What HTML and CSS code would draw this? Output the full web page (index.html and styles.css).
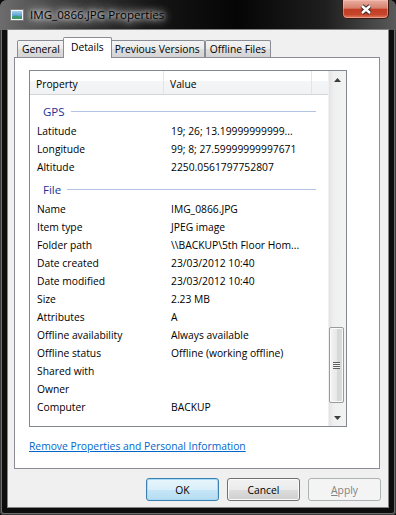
FILE: index.html
```html
<!DOCTYPE html>
<html lang="en">

<head>
    <meta charset="utf-8">
    <title>IMG_0866.JPG Properties</title>
    <link rel="stylesheet" href="styles.css">
</head>

<body>
    <div class="window">
        <div class="titleBar">
            <svg class="titleIcon" width="14" height="12" viewBox="0 0 14 12">
                <defs>
                    <linearGradient id="sky" x1="0" y1="0" x2="0" y2="1">
                        <stop offset="0" stop-color="#9fd0f0"/>
                        <stop offset="1" stop-color="#2f7fbf"/>
                    </linearGradient>
                </defs>
                <rect x="0.5" y="0.5" width="13" height="11" fill="#f6f6f6" stroke="#7d7d7d"/>
                <rect x="2" y="2" width="10" height="8" fill="url(#sky)"/>
                <path d="M2 8 Q5 5.5 8 7 T12 6.5 V10 H2 Z" fill="#3f9a6a"/>
            </svg>
            <span class="titleText">IMG_0866.JPG Properties</span>
            <div class="closeBtn">
                <svg width="14" height="11" viewBox="0 0 14 11">
                    <path d="M3 2 L11 9 M11 2 L3 9" stroke="#3a2a28" stroke-width="4.4"/>
                    <path d="M3 2 L11 9 M11 2 L3 9" stroke="#ffffff" stroke-width="2.4"/>
                </svg>
            </div>
        </div>

        <div class="client">
            <div class="tabs">
                <div class="tab">General</div>
                <div class="tab selected">Details</div>
                <div class="tab">Previous Versions</div>
                <div class="tab">Offline Files</div>
            </div>

            <div class="panel">
                <div class="list">
                    <div class="listContent">
                        <div class="header">
                            <div class="colProp">Property</div>
                            <div class="colVal">Value</div>
                            <div class="colRest"></div>
                        </div>

                        <div class="group first"><span>GPS</span><div class="groupLine"></div></div>
                        <div class="row"><span class="prop">Latitude</span><span class="val">19; 26; 13.19999999999...</span></div>
                        <div class="row"><span class="prop">Longitude</span><span class="val">99; 8; 27.59999999997671</span></div>
                        <div class="row"><span class="prop">Altitude</span><span class="val">2250.0561797752807</span></div>

                        <div class="group"><span>File</span><div class="groupLine"></div></div>
                        <div class="row"><span class="prop">Name</span><span class="val">IMG_0866.JPG</span></div>
                        <div class="row"><span class="prop">Item type</span><span class="val">JPEG image</span></div>
                        <div class="row"><span class="prop">Folder path</span><span class="val">\\BACKUP\5th Floor Hom...</span></div>
                        <div class="row"><span class="prop">Date created</span><span class="val">23/03/2012 10:40</span></div>
                        <div class="row"><span class="prop">Date modified</span><span class="val">23/03/2012 10:40</span></div>
                        <div class="row"><span class="prop">Size</span><span class="val">2.23 MB</span></div>
                        <div class="row"><span class="prop">Attributes</span><span class="val">A</span></div>
                        <div class="row"><span class="prop">Offline availability</span><span class="val">Always available</span></div>
                        <div class="row"><span class="prop">Offline status</span><span class="val">Offline (working offline)</span></div>
                        <div class="row"><span class="prop">Shared with</span><span class="val"></span></div>
                        <div class="row"><span class="prop">Owner</span><span class="val"></span></div>
                        <div class="row"><span class="prop">Computer</span><span class="val">BACKUP</span></div>
                    </div>

                    <div class="scrollbar">
                        <div class="scrollBtn">
                            <svg width="7" height="4" viewBox="0 0 7 4"><path d="M0 4 L3.5 0 L7 4 Z" fill="#3c3c3c"/></svg>
                        </div>
                        <div class="track">
                            <div class="thumb"><div class="grip"></div></div>
                        </div>
                        <div class="scrollBtn">
                            <svg width="7" height="4" viewBox="0 0 7 4"><path d="M0 0 L7 0 L3.5 4 Z" fill="#3c3c3c"/></svg>
                        </div>
                    </div>
                </div>

                <a class="removeLink" href="#">Remove Properties and Personal Information</a>
            </div>

            <div class="buttons">
                <button class="btn okBtn">OK</button>
                <button class="btn">Cancel</button>
                <button class="btn disabled"><u>A</u>pply</button>
            </div>
        </div>
    </div>
</body>

</html>
```

FILE: styles.css
```css
body {
    margin: 0;
    background-color: #0b0b0b;
    font-family: "Open Sans", "Noto Sans", sans-serif;
    font-size: 10.3px;
    color: #000;
}

.window {
    width: 396px;
    height: 515px;
    display: flex;
    flex-direction: column;
    border-radius: 7px 7px 4px 4px;
    background-color: #0d0d0d;
    box-shadow: inset 0 0 0 1px #3c3c3c, inset 0 0 0 2px #6e6e6e;
}

/* title bar */
.titleBar {
    height: 30px;
    display: flex;
    align-items: flex-start;
    border-radius: 7px 7px 0 0;
    background: linear-gradient(90deg, #6d6d6d 0%, #3a3a3a 18%, #141414 40%, #050505 60%, #1e1e1e 82%, #5a5a5a 100%);
}

.titleIcon {
    margin: 9px 0 0 10px;
}

.titleText {
    margin: 6px 0 0 6px;
    font-size: 11.6px;
    line-height: 18px;
    color: #000;
    text-shadow: 0 0 4px #f0f0f0, 0 0 8px #e0e0e0, 0 0 12px #c8c8c8, 0 0 16px #a8a8a8;
}

.closeBtn {
    margin-left: auto;
    margin-right: 7px;
    width: 47px;
    height: 19px;
    box-sizing: border-box;
    border: 1px solid #3b1a14;
    border-top: none;
    border-radius: 0 0 5px 5px;
    background: linear-gradient(#e9b0a3 0%, #d8806d 45%, #c23e25 52%, #c5442a 80%, #df7f62 100%);
    box-shadow: inset 0 0 0 1px rgba(255, 200, 190, 0.45);
    display: flex;
    align-items: center;
    justify-content: center;
}

/* client area */
.client {
    flex: 1;
    margin: 0 8px 8px 8px;
    background-color: #f0f0f0;
    box-shadow: 0 0 0 1px #858585;
    display: flex;
    flex-direction: column;
}

.tabs {
    height: 27px;
    padding-left: 9px;
    display: flex;
    align-items: flex-end;
}

.tab {
    height: 17px;
    box-sizing: border-box;
    padding: 0 4px;
    border: 1px solid #898c95;
    border-bottom: none;
    border-radius: 2px 2px 0 0;
    line-height: 16px;
    white-space: nowrap;
    background: linear-gradient(#f3f3f3 0%, #ebebeb 50%, #dddddd 51%, #d4d4d4 100%);
}

.tab.selected {
    position: relative;
    z-index: 1;
    height: 21px;
    margin: 0 -2px -1px -2px;
    padding: 0 7px;
    line-height: 18px;
    background: #fff;
}

.panel {
    height: 412px;
    box-sizing: border-box;
    margin: 0 8px 0 6px;
    padding: 12px 0 0 14px;
    border: 1px solid #898c95;
    background-color: #fff;
}

/* property list */
.list {
    width: 318px;
    height: 357px;
    box-sizing: border-box;
    border: 1px solid #828790;
    display: flex;
}

.listContent {
    flex: 1;
    overflow: hidden;
}

.header {
    height: 23px;
    display: flex;
    border-bottom: 1px solid #d5d5d5;
    background: linear-gradient(#ffffff 0%, #ffffff 42%, #f4f5f7 46%, #f1f2f4 100%);
    line-height: 22px;
}

.colProp {
    width: 134px;
    box-sizing: border-box;
    padding: 2px 0 0 6px;
    border-right: 1px solid #e2e4e8;
}

.colVal {
    width: 148px;
    box-sizing: border-box;
    padding: 2px 0 0 6px;
    border-right: 1px solid #e2e4e8;
}

.colRest {
    flex: 1;
}

.group {
    height: 24px;
    box-sizing: border-box;
    padding-top: 2px;
    display: flex;
    align-items: center;
    color: #1e3296;
    font-size: 11.5px;
}

.group.first {
    margin-top: 3px;
}

.group span {
    padding-left: 13px;
}

.groupLine {
    flex: 1;
    height: 1px;
    margin: 0 12px 0 6px;
    background-color: #b3c3e6;
}

.row {
    height: 18px;
    display: flex;
    line-height: 18px;
    white-space: nowrap;
}

.prop {
    width: 134px;
    box-sizing: border-box;
    padding-left: 7px;
}

.val {
    padding-left: 7px;
}

/* scrollbar */
.scrollbar {
    width: 17px;
    display: flex;
    flex-direction: column;
    background: linear-gradient(90deg, #e3e3e3 0%, #efefef 25%, #f3f3f3 100%);
    border-left: 1px solid #f0f0f0;
}

.scrollBtn {
    height: 17px;
    display: flex;
    align-items: center;
    justify-content: center;
}

.track {
    flex: 1;
    display: flex;
    flex-direction: column;
    justify-content: flex-end;
}

.thumb {
    height: 76px;
    box-sizing: border-box;
    margin: 0 2px 6px 0;
    border: 1px solid #9a9a9a;
    border-radius: 2px;
    background: linear-gradient(90deg, #f4f4f4 0%, #e8e8e8 50%, #d6d6d6 51%, #dcdcdc 100%);
    box-shadow: inset 0 0 0 1px #fafafa;
    display: flex;
    align-items: center;
    justify-content: center;
}

.grip {
    width: 7px;
    height: 7px;
    background: repeating-linear-gradient(#5e5e5e 0, #5e5e5e 1px, #f4f4f4 1px, #f4f4f4 2px);
}

.removeLink {
    display: block;
    margin-top: 11px;
    line-height: 16px;
    color: #0066cc;
    text-decoration: underline;
    width: max-content;
}

/* buttons */
.buttons {
    margin-top: 9px;
    padding-right: 7px;
    display: flex;
    justify-content: flex-end;
    gap: 8px;
}

.btn {
    width: 73px;
    height: 23px;
    padding: 0;
    font-family: "Open Sans", "Noto Sans", sans-serif;
    font-size: 10.3px;
    color: #000;
    border: 1px solid #707070;
    border-radius: 3px;
    background: linear-gradient(#f2f2f2 0%, #ebebeb 50%, #dddddd 51%, #cfcfcf 100%);
    box-shadow: inset 0 0 0 1px #fbfbfb;
}

.okBtn {
    border-color: #3c7fb1;
    background: linear-gradient(#e8f5fc 0%, #d9eff9 50%, #c6e6f7 51%, #b6dcf1 100%);
    box-shadow: inset 0 0 0 1px #a8daf5;
}

.btn.disabled {
    color: #838383;
    border-color: #adb2b5;
    background: #f4f4f4;
    box-shadow: none;
}
```
